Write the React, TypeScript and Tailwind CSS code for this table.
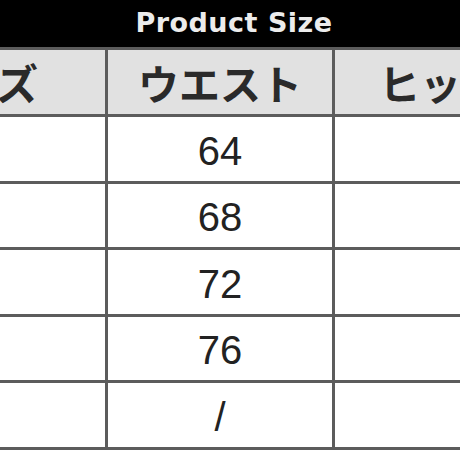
import React from 'react';

const rows = ['64', '68', '72', '76', '/'];

export default function App() {
  return (
    <div className="w-[460px] h-[460px] overflow-hidden bg-white" style={{ fontFamily: '"Liberation Sans", "Noto Sans CJK JP", sans-serif' }}>
      <div className="h-[47px] bg-black flex items-center justify-center">
        <span className="text-[27px] font-bold text-[#ececec] tracking-[0.5px] font-['DejaVu_Sans',sans-serif] pl-[8px]">Product Size</span>
      </div>
      <table className="ml-[-122px] border-collapse table-fixed w-[684px]">
        <tbody>
          <tr className="bg-[#e1e1e1] h-[67px]">
            <td className="border-[3px] border-[#5c5c5c] w-[227px] text-right pr-[67px] whitespace-nowrap text-[42px] text-[#2a2a2a] font-['Noto_Sans_CJK_JP',sans-serif] font-semibold leading-none">サイズ</td>
            <td className="border-[3px] border-[#5c5c5c] w-[227px] text-center text-[41px] text-[#2a2a2a] font-['Noto_Sans_CJK_JP',sans-serif] font-semibold leading-none">ウエスト</td>
            <td className="border-[3px] border-[#5c5c5c] w-[227px] text-left pl-[44px] whitespace-nowrap text-[41px] text-[#2a2a2a] font-['Noto_Sans_CJK_JP',sans-serif] font-semibold leading-none">ヒップ</td>
          </tr>
          {rows.map((r) => (
            <tr key={r} className="h-[66.5px]">
              <td className="border-[3px] border-[#5c5c5c]"></td>
              <td className="border-[3px] border-[#5c5c5c] text-center text-[40px] text-[#222] leading-none pt-[4px]">{r}</td>
              <td className="border-[3px] border-[#5c5c5c]"></td>
            </tr>
          ))}
        </tbody>
      </table>
    </div>
  );
}
